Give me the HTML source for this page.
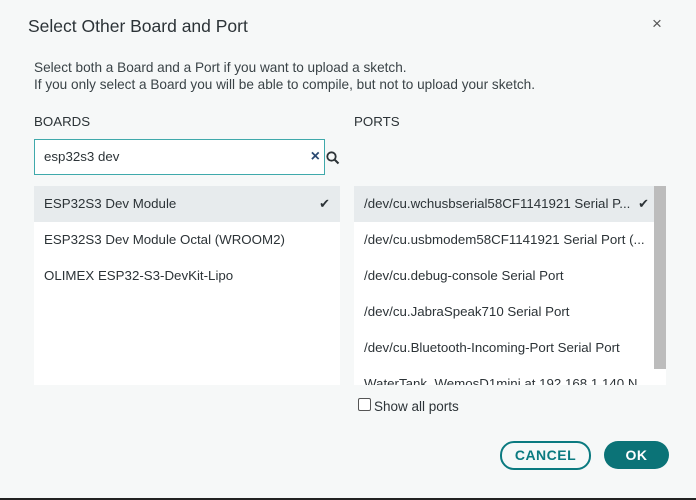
<!DOCTYPE html>
<html><head><style>
body{margin:0;width:696px;height:500px;background:#f6f8f8;font-family:"Liberation Sans",sans-serif;color:#2c3337;position:relative;overflow:hidden}
.a{position:absolute}
.t{font-size:17.5px;left:28px;top:16px}
.d{left:34px;top:59px;font-size:13.6px;line-height:17px;color:#3a4347}
.h{font-size:13.3px;top:114px}
.box{left:34px;top:139px;width:291px;height:36px;background:#fff;border:1px solid #3fa9ab;box-sizing:border-box}
.list{background:#fff;top:186px;height:199px;overflow:hidden}
.row{height:36px;line-height:36px;font-size:13.3px;padding-left:10px;white-space:nowrap;position:relative}
.sel{background:#e7ebed}
.ck{position:absolute;right:10px;top:0;font-size:13px}
.btn{border-radius:14px;font-weight:bold;font-size:14px;text-align:center;letter-spacing:.5px}
</style></head><body>
<div class="a t">Select Other Board and Port</div>
<div class="a" style="left:652px;top:14px;font-size:17px;color:#555">×</div>
<div class="a d">Select both a Board and a Port if you want to upload a sketch.<br>If you only select a Board you will be able to compile, but not to upload your sketch.</div>
<div class="a h" style="left:34px">BOARDS</div>
<div class="a h" style="left:354px">PORTS</div>
<div class="a box"><span class="a" style="left:9px;top:9px;font-size:13.3px">esp32s3 dev</span><span class="a" style="right:4px;top:8px;font-size:16px;color:#2b4a72;font-weight:bold">×</span></div>
<svg class="a" style="left:326px;top:151px" width="14" height="14" viewBox="0 0 14 14"><circle cx="5.5" cy="5.5" r="4.2" fill="none" stroke="#2c3337" stroke-width="1.8"/><path d="M8.5 8.5L12.5 12.5" stroke="#2c3337" stroke-width="2"/></svg>
<div class="a list" style="left:34px;width:306px">
<div class="row sel">ESP32S3 Dev Module<span class="ck">✔</span></div>
<div class="row">ESP32S3 Dev Module Octal (WROOM2)</div>
<div class="row">OLIMEX ESP32-S3-DevKit-Lipo</div>
</div>
<div class="a list" style="left:354px;width:312px">
<div class="row sel" style="width:290px">/dev/cu.wchusbserial58CF1141921 Serial P...<span class="ck" style="right:5px">✔</span></div>
<div class="row">/dev/cu.usbmodem58CF1141921 Serial Port (...</div>
<div class="row">/dev/cu.debug-console Serial Port</div>
<div class="row">/dev/cu.JabraSpeak710 Serial Port</div>
<div class="row">/dev/cu.Bluetooth-Incoming-Port Serial Port</div>
<div class="row">WaterTank_WemosD1mini at 192.168.1.140 N</div>
<div class="a" style="left:300px;top:0;width:12px;height:183px;background:#bcbcbc"></div>
</div>
<div class="a" style="left:358px;top:398px;width:11px;height:11px;border:1px solid #555;border-radius:2px;background:#fff"></div>
<div class="a" style="left:374px;top:399px;font-size:13.5px">Show all ports</div>
<div class="a btn" style="left:500px;top:441px;width:87px;height:25px;line-height:25px;border:2px solid #0b7a80;color:#0b7a80">CANCEL</div>
<div class="a btn" style="left:604px;top:441px;width:65px;height:28px;line-height:28px;background:#0b7377;color:#fff">OK</div>
<div class="a" style="left:0;top:498px;width:696px;height:2px;background:#222"></div>
</body></html>
